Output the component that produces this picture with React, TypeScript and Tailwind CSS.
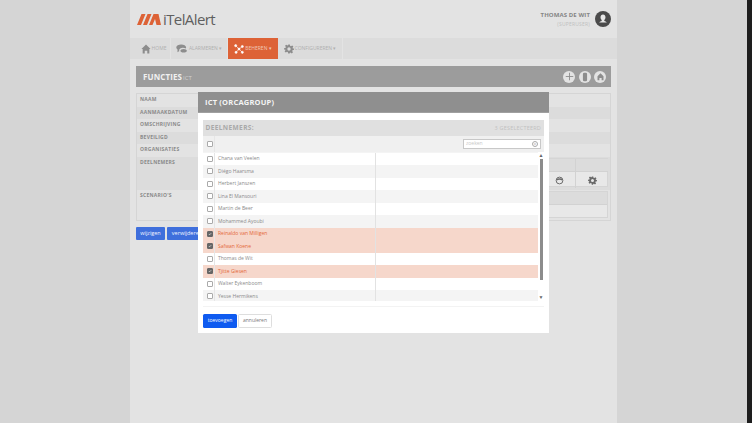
import React from "react";

const people: [string, boolean, boolean][] = [
  ["Chana van Veelen", false, false],
  ["Diégo Haarsma", false, true],
  ["Herbert Janszen", false, false],
  ["Lina El Mansouri", false, true],
  ["Martin de Beer", false, false],
  ["Mohammed Ayoubi", false, true],
  ["Reinaldo van Milligen", true, false],
  ["Safwan Koene", true, true],
  ["Thomas de Wit", false, false],
  ["Tjitte Giesen", true, true],
  ["Walter Eykenboom", false, false],
  ["Yesse Hermikens", false, true],
];

const labels: [string, string][] = [
  ["NAAM", "h-[12.5px] bg-[#e3e3e3]"],
  ["AANMAAKDATUM", "h-[12.5px] bg-[#dcdcdc]"],
  ["OMSCHRIJVING", "h-[12.5px] bg-[#e3e3e3]"],
  ["BEVEILIGD", "h-[12.5px] bg-[#dcdcdc]"],
  ["ORGANISATIES", "h-[12.5px] bg-[#e3e3e3]"],
  ["DEELNEMERS", "h-[33px] bg-[#dcdcdc]"],
  ["SCENARIO'S", "h-[30px] bg-[#e3e3e3]"],
];

function Check({ on }: { on: boolean }) {
  return (
    <span className={`flex h-[6px] w-[6px] items-center justify-center rounded-[1px] border-[0.5px] ${on ? "border-[#666] bg-[#666]" : "border-[#aaa] bg-white"}`}>
      {on && (
        <svg viewBox="0 0 10 10" className="h-[6px] w-[6px]">
          <path d="M2 5l2 2 4-4" fill="none" stroke="#fff" strokeWidth="1.500" />
        </svg>
      )}
    </span>
  );
}

function Round({ children }: { children: React.ReactNode }) {
  return (
    <span className="flex h-[12px] w-[12px] items-center justify-center rounded-full bg-[#e3e3e3] text-[#8d8d8d]">
      {children}
    </span>
  );
}

function Gear({ className }: { className: string }) {
  return (
    <svg viewBox="0 0 24 24" className={className} fill="currentColor">
      <path
        fillRule="evenodd"
        d="M10 1h4l.7 3.400 2 .9 3-1.900 2.800 2.800-1.900 3 .9 2L24 10v4l-3.500.7-.9 2 1.900 3-2.800 2.800-3-1.900-2 .9L14 23h-4l-.7-3.500-2-.9-3 1.900-2.800-2.800 1.900-3-.9-2L0 14v-4l3.500-.7.9-2-1.900-3 2.800-2.800 3 1.900 2-.9L10 1zm2 7a4 4 0 100 8 4 4 0 000-8z"
      />
    </svg>
  );
}

export default function App() {
  return (
    <div className="relative h-[423px] w-[752px] overflow-hidden bg-[#d5d5d5] font-['Open_Sans',sans-serif]">
      <div className="flex h-full">
        <div className="w-[130px] shrink-0" />
        <main className="flex h-full w-[487px] shrink-0 flex-col bg-[#e3e3e3]">
          <header className="flex h-[38px] items-center justify-between pr-[6px] pl-[7px]">
            <div className="flex items-center gap-[2px]">
              <svg viewBox="0 0 24 11" className="h-[11px] w-[24px] text-[#dd6236]" fill="currentColor">
                <path d="M0 11L4.500 0H8.500L4 11zM6 11L10.500 0H14.500L10 11zM12 11L16.500 0H21.500L24 11H19.500L18 5 15.500 11z" />
              </svg>
              <span className="text-[15px] leading-none tracking-[-0.6px] text-[#5f5f5f]">iTelAlert</span>
            </div>
            <div className="flex items-center gap-[5px]">
              <div className="flex flex-col items-end">
                <span className="text-[6px] leading-[9px] font-bold tracking-[0.1px] text-[#858585]">THOMAS DE WIT</span>
                <span className="text-[5px] leading-[8px] tracking-[0.2px] text-[#c0c0c0]">(SUPERUSER)</span>
              </div>
              <span className="flex h-[16px] w-[16px] items-center justify-center rounded-full bg-[#4b4b4b]">
                <svg viewBox="0 0 16 16" className="h-[16px] w-[16px]" fill="#e8e8e8">
                  <path d="M8 3.500c1.500 0 2.500 1.200 2.500 2.800 0 1.200-.6 2.200-1.200 2.800v1c.8.400 2 .6 2.500 1.400H4.200c.5-.8 1.700-1 2.500-1.400v-1c-.6-.6-1.200-1.600-1.200-2.800C5.500 4.700 6.500 3.500 8 3.500z" />
                </svg>
              </span>
            </div>
          </header>

          <nav className="flex h-[21px] bg-[#dcdcdc] pl-[6px] text-[5px] text-[#b0b0b0]">
            <div className="flex w-[35px] items-center justify-center gap-[1px] border-r border-[#e3e3e3] pl-[1px]">
              <svg viewBox="0 0 12 12" className="h-[10px] w-[10px]" fill="#8d8d8d">
                <path d="M6 .5l5.500 5.500H10v5.500H7.500V8h-3v3.500H2V6H.5z" />
              </svg>
              HOME
            </div>
            <div className="flex w-[57px] items-center justify-center gap-[1px] border-r border-[#e3e3e3]">
              <svg viewBox="0 0 14 11" className="h-[9px] w-[12px]" fill="#8d8d8d">
                <path d="M6 .5c3.300 0 6 1.500 6 3.500 0 .6-.2 1-.5 1.500C10.500 4.800 9.400 4.500 8 4.500 5.500 4.500 3.500 6 3.500 7.500c0 .5.100.8.3 1.200L1.500 10V6.800C.5 6.100 0 5 0 4 0 2 2.700.5 6 .5zM9 6c2.300 0 4 1 4 2.300 0 1.200-1.700 2.200-4 2.200S5 9.500 5 8.300C5 7 6.700 6 9 6z" />
              </svg>
              ALARMEREN ▾
            </div>
            <div className="flex w-[50px] items-center justify-center gap-[1px] bg-[#dd6236] text-[#f0c8b8]">
              <svg viewBox="0 0 12 12" className="h-[10px] w-[10px]" fill="#fff" stroke="#fff" strokeWidth="0.7">
                <path d="M2 2l4 4 4-3M6 6L2.500 10M6 6l4 4" fill="none" />
                <circle cx="2" cy="2" r="1.300" />
                <circle cx="10" cy="3" r="1.300" />
                <circle cx="6" cy="6" r="1.300" />
                <circle cx="2.500" cy="10" r="1.300" />
                <circle cx="10" cy="10" r="1.300" />
              </svg>
              BEHEREN ▾
            </div>
            <div className="flex w-[65px] items-center justify-center gap-[1px] border-r border-[#e3e3e3]">
              <Gear className="h-[10px] w-[10px] text-[#8d8d8d]" />
              CONFIGUREREN ▾
            </div>
          </nav>

          <section className="flex flex-col px-[6px] pt-[7px]">
            <div className="flex h-[21px] items-center justify-between bg-[#9c9c9c] pr-[5px] pl-[7px]">
              <div className="flex items-baseline gap-[1px] text-[#f0f0f0]">
                <span className="text-[8px] font-bold tracking-[0.1px]">FUNCTIES</span>
                <span className="text-[6px] text-[#d0d0d0]">ICT</span>
              </div>
              <div className="flex gap-[3.5px]">
                <Round>
                  <svg viewBox="0 0 12 12" className="h-[9px] w-[9px]" stroke="currentColor" strokeWidth="1.200">
                    <path d="M6 1v10M1 6h10" />
                  </svg>
                </Round>
                <Round>
                  <svg viewBox="0 0 12 12" className="h-[10px] w-[10px]" fill="currentColor">
                    <rect x="3.500" y="1" width="5" height="10" rx="1.500" />
                  </svg>
                </Round>
                <Round>
                  <svg viewBox="0 0 12 12" className="h-[9px] w-[9px]" fill="currentColor">
                    <path d="M6 1.500l4 4V11H7.500V8h-3v3H2V5.500z" />
                  </svg>
                </Round>
              </div>
            </div>

            <div className="mt-[6px] h-[128px] border border-[#d5d5d5] bg-[#e3e3e3]">
              {labels.map(([label, cls]) => (
                <div key={label} className={`flex items-start pl-[3px] text-[5px] leading-[11px] font-bold tracking-[0.25px] text-[#8a8a8a] ${cls}`}>
                  {label}
                </div>
              ))}
            </div>

            <div className="mt-[6px] flex gap-[2px] text-[5.5px] text-[#f0f4ff]">
              <span className="flex h-[13px] w-[29px] items-center justify-center rounded-[1px] bg-[#3f6fdc]">wijzigen</span>
              <span className="flex h-[13px] w-[40px] items-center justify-center rounded-[1px] bg-[#3f6fdc]">verwijderen</span>
            </div>
          </section>
        </main>
        <div className="flex-1" />
        <div className="w-[5px] shrink-0 bg-[#1e1e1e]" />
      </div>

      {/* Background tables peeking out from behind the dialog */}
      <div className="absolute top-[158px] left-[549px] grid h-[29px] w-[59px] grid-cols-[27px_32px] grid-rows-[13px_16px] border-y border-r border-[#d5d5d5] bg-[#e8e8e8]">
        <div className="border-r border-b border-[#d2d2d2] bg-[#dcdcdc]" />
        <div className="border-b border-[#d2d2d2] bg-[#dcdcdc]" />
        <div className="flex items-center justify-start border-r border-[#d2d2d2] pl-[5.5px]">
          <svg viewBox="0 0 12 12" className="h-[9px] w-[9px]" fill="none" stroke="#6a6a6a" strokeWidth="1.300">
            <circle cx="6" cy="6" r="4.500" />
            <path d="M2 5.500c2-2 6-2 8 0" strokeWidth="1.800" />
          </svg>
        </div>
        <div className="flex items-center justify-center">
          <Gear className="h-[9px] w-[9px] text-[#6a6a6a]" />
        </div>
      </div>
      <div className="absolute top-[191px] left-[549px] flex h-[27px] w-[59px] flex-col border-y border-r border-[#d5d5d5] bg-[#e8e8e8]">
        <div className="h-[13px] border-b border-[#d2d2d2] bg-[#dcdcdc]" />
      </div>

      {/* Dialog */}
      <div className="absolute top-[92px] left-[198px] flex h-[241px] w-[351px] flex-col bg-white">
        <div className="flex h-[21px] items-center border-b border-[#a0a0a0] bg-[#8f8f8f] pt-[1px] pl-[7px] text-[7.5px] font-bold tracking-[0.2px] text-[#f4f4f4]">
          ICT (ORCAGROUP)
        </div>
        <div className="flex flex-1 flex-col px-[5px] pt-[7px]">
          <div className="flex h-[16px] shrink-0 items-center justify-between bg-[#e0e0e0] px-[3px]">
            <span className="-ml-[0.5px] text-[6.5px] font-bold tracking-[0.4px] text-[#a9a9a9]">DEELNEMERS:</span>
            <span className="text-[5.5px] tracking-[0.2px] text-[#c0c0c0]">3 GESELECTEERD</span>
          </div>
          <div className="flex h-[16px] shrink-0 items-center bg-[#f0f0f0]">
            <div className="flex h-full w-[12px] items-center justify-center border-r border-[#e6e6e6] pl-[3px]">
              <Check on={false} />
            </div>
            <div className="flex-1" />
            <div className="mr-[3px] flex h-[10px] w-[78px] items-center justify-between border border-[#c8c8c8] bg-white px-[2px] text-[5px] text-[#c8c8c8]">
              zoeken
              <span className="flex h-[6px] w-[6px] items-center justify-center rounded-full border-[0.5px] border-[#aaa] text-[5px] leading-none text-[#aaa]">×</span>
            </div>
          </div>
          <div className="flex h-[149px] shrink-0 bg-[#f4f4f4]">
            <div className="flex-1 overflow-hidden pt-[0.5px]">
              {people.map(([name, on, alt]) => (
                <div
                  key={name}
                  className={`flex h-[12.5px] items-center text-[5px] ${on ? "bg-[#f6d7cb] text-[#e4683a]" : alt ? "bg-[#f4f4f4] text-[#8a8a8a]" : "bg-white text-[#8a8a8a]"}`}
                >
                  <div className="flex h-full w-[12px] items-center justify-center border-r border-[#e6e6e6] pl-[3px]">
                    <Check on={on} />
                  </div>
                  <div className="flex h-full w-[161px] items-center border-r border-[#e2e2e2] pl-[3px]">{name}</div>
                </div>
              ))}
            </div>
            <div className="flex w-[6px] flex-col items-center bg-white">
              <span className="text-[5px] leading-[7px] text-[#666]">▲</span>
              <div className="h-[121px] w-[3px] bg-[#8c8c8c]" />
              <span className="mt-auto text-[5px] leading-[7px] text-[#666]">▼</span>
            </div>
          </div>
          <div className="mt-[5px] h-[1px] bg-[#f3f3f3]" />
          <div className="mt-[7px] flex gap-[1px] text-[5px]">
            <span className="flex h-[14px] w-[34px] items-center justify-center rounded-[1.5px] bg-[#0f5bf0] text-white">toevoegen</span>
            <span className="flex h-[14px] w-[34px] items-center justify-center rounded-[1.5px] border border-[#dedede] bg-white text-[#777]">annuleren</span>
          </div>
        </div>
      </div>
    </div>
  );
}
